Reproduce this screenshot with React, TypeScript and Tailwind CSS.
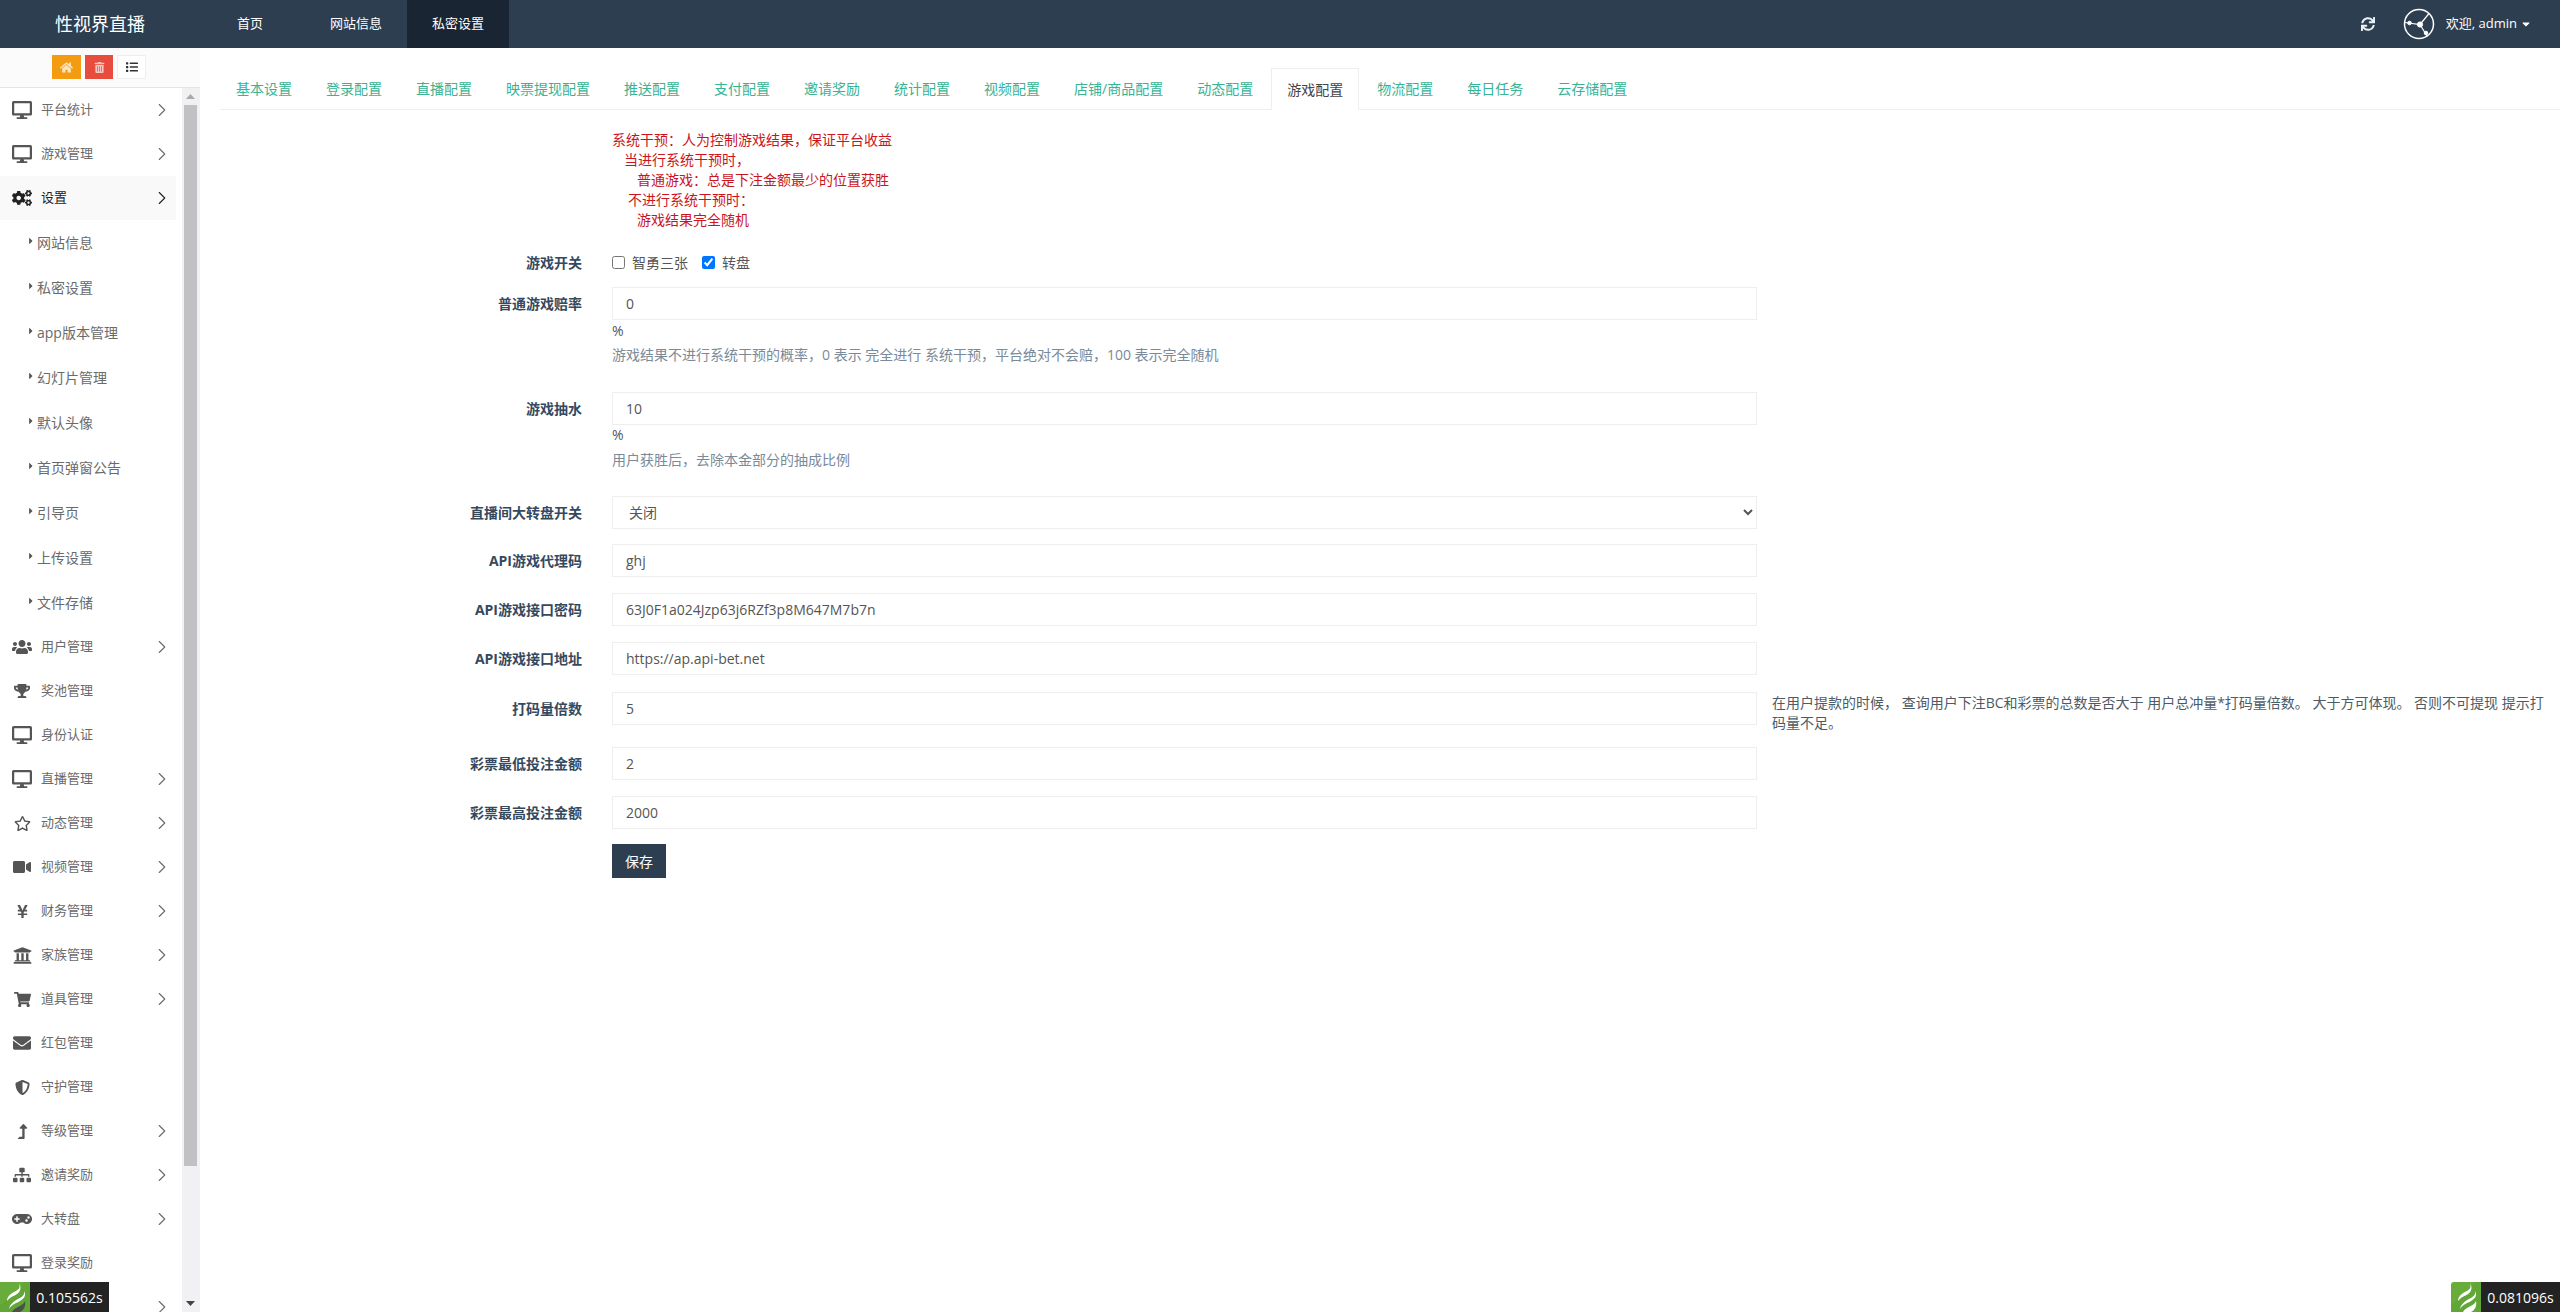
import React from 'react';
import { ChevronRight } from 'lucide-react';
import {
  FaCaretDown,
  FaCaretRight,
  FaCogs,
  FaDesktop,
  FaEnvelope,
  FaGamepad,
  FaHome,
  FaLevelUpAlt,
  FaList,
  FaRegStar,
  FaShieldAlt,
  FaShoppingCart,
  FaSitemap,
  FaSync,
  FaTrashAlt,
  FaTrophy,
  FaUniversity,
  FaUsers,
  FaVideo,
  FaYenSign,
} from 'react-icons/fa';

type MenuItem = {
  label: string;
  icon?: React.ReactNode;
  arrow?: boolean;
  active?: boolean;
  sub?: boolean;
};

const desktop = <FaDesktop size={20} />;

const menuItems: MenuItem[] = [
  { label: '平台统计', icon: desktop, arrow: true },
  { label: '游戏管理', icon: desktop, arrow: true },
  { label: '设置', icon: <FaCogs size={20} />, arrow: true, active: true },
  { label: '网站信息', sub: true },
  { label: '私密设置', sub: true },
  { label: 'app版本管理', sub: true },
  { label: '幻灯片管理', sub: true },
  { label: '默认头像', sub: true },
  { label: '首页弹窗公告', sub: true },
  { label: '引导页', sub: true },
  { label: '上传设置', sub: true },
  { label: '文件存储', sub: true },
  { label: '用户管理', icon: <FaUsers size={20} />, arrow: true },
  { label: '奖池管理', icon: <FaTrophy size={16} /> },
  { label: '身份认证', icon: desktop },
  { label: '直播管理', icon: desktop, arrow: true },
  { label: '动态管理', icon: <FaRegStar size={17} />, arrow: true },
  { label: '视频管理', icon: <FaVideo size={18} />, arrow: true },
  { label: '财务管理', icon: <FaYenSign size={15} />, arrow: true },
  { label: '家族管理', icon: <FaUniversity size={19} />, arrow: true },
  { label: '道具管理', icon: <FaShoppingCart size={17} />, arrow: true },
  { label: '红包管理', icon: <FaEnvelope size={18} /> },
  { label: '守护管理', icon: <FaShieldAlt size={15} /> },
  { label: '等级管理', icon: <FaLevelUpAlt size={15} />, arrow: true },
  { label: '邀请奖励', icon: <FaSitemap size={18} />, arrow: true },
  { label: '大转盘', icon: <FaGamepad size={20} />, arrow: true },
  { label: '登录奖励', icon: desktop },
  // last row sits under the trace badge, only its arrow shows
  { label: '', arrow: true },
];

const tabs = [
  '基本设置',
  '登录配置',
  '直播配置',
  '映票提现配置',
  '推送配置',
  '支付配置',
  '邀请奖励',
  '统计配置',
  '视频配置',
  '店铺/商品配置',
  '动态配置',
  '游戏配置',
  '物流配置',
  '每日任务',
  '云存储配置',
];

const Flame = ({ dark }: { dark?: boolean }) => (
  <svg viewBox="0 0 30 30" className="h-[30px] w-[30px] shrink-0">
    <rect width="30" height="30" fill="#68ad3c" />
    <path d="M0 24 L24 0 L30 0 L30 30 L0 30 Z" fill="#5fa233" opacity="0.6" />
    <path d="M19 1c2 5-1 7-5 9-4 2-7 5-7 9 3-4 7-5 10-7 3-2 5-6 2-11z" fill="#fff" />
    <path d="M24 9c1 4-2 6-6 8-4 2-8 5-9 10 3-5 8-6 11-8 3-2 7-5 4-10z" fill="#fff" />
    <path d="M25 19c-1 3-4 4-7 6-3 1-5 3-6 5h8c4-2 6-6 5-11z" fill={dark ? '#4a5148' : '#fff'} />
  </svg>
);

const TraceBadge = ({ time, className, dark }: { time: string; className: string; dark?: boolean }) => (
  <div className={`fixed bottom-0 flex h-[30px] ${className}`}>
    <Flame dark={dark} />
    <div className="flex w-[79px] items-center justify-center bg-[#232323] text-[14px] text-white">{time}</div>
  </div>
);

const MenuRow = ({ item }: { item: MenuItem }) => {
  if (item.sub) {
    return (
      <div className="flex h-[45px] w-[176px] shrink-0 items-center pl-[26px] text-[14px] text-[#6a6a6a]">
        <FaCaretRight size={10} className="-mt-[3px] mr-[1px] text-[#555]" />
        <span>{item.label}</span>
      </div>
    );
  }
  return (
    <div
      className={`flex h-[44px] w-[176px] shrink-0 items-center pl-[12px] text-[13px] ${
        item.active ? 'bg-[#f9f9fa] text-[#222]' : 'text-[#6a6a6a]'
      }`}
    >
      <span className={`flex w-[20px] justify-center ${item.active ? 'text-[#222]' : 'text-[#555]'}`}>{item.icon}</span>
      <span className="ml-[9px]">{item.label}</span>
      {item.arrow && <ChevronRight size={22} strokeWidth={1.2} className="mr-[3px] ml-auto" />}
    </div>
  );
};

const Sidebar = () => (
  <aside className="flex h-full w-[200px] shrink-0 flex-col">
    <div className="flex h-[40px] shrink-0 gap-[4px] border-b border-[#e4e4e4] bg-[#fbfbfb] pt-[7px] pl-[52px]">
      <div className="flex h-[24px] w-[29px] items-center justify-center bg-[#f39c12] text-[#f8e4c0]">
        <FaHome size={13} />
      </div>
      <div className="flex h-[24px] w-[28px] items-center justify-center bg-[#e74c3c] text-[#f5c6c0]">
        <FaTrashAlt size={11} />
      </div>
      <div className="flex h-[24px] w-[29px] items-center justify-center border border-[#eeeeee] bg-white text-[#333]">
        <FaList size={12} />
      </div>
    </div>
    <div className="flex min-h-0 flex-1">
      <div className="flex w-[182px] shrink-0 flex-col overflow-hidden">
        {menuItems.map((item, i) => (
          <MenuRow key={i} item={item} />
        ))}
      </div>
      <div className="flex w-[18px] flex-col bg-[#f1f0f2] pl-[2px]">
        <div className="flex h-[17px] w-[13px] items-center justify-center">
          <svg width="9" height="5" viewBox="0 0 9 5">
            <path d="M4.5 0L9 5H0Z" fill="#a9a9a9" />
          </svg>
        </div>
        <div className="h-[1061px] w-[13px] bg-[#c1c0c2]" />
        <div className="mt-auto flex h-[17px] w-[13px] items-center justify-center">
          <svg width="9" height="5" viewBox="0 0 9 5">
            <path d="M0 0H9L4.5 5Z" fill="#444" />
          </svg>
        </div>
      </div>
    </div>
  </aside>
);

const Header = () => (
  <header className="flex h-[48px] shrink-0 items-center bg-[#2c3e50] text-[13px] text-white">
    <div className="w-[200px] pl-[55px] text-[18px]">性视界直播</div>
    <div className="flex h-full items-center">
      <div className="pr-[42px] pl-[37px]">首页</div>
      <div className="px-[25px]">网站信息</div>
      <div className="flex h-full items-center bg-[#1a2533] px-[25px]">私密设置</div>
    </div>
    <div className="ml-auto flex items-center pr-[28px]">
      <FaSync size={14} className="mr-[28px] text-[#eef1f4]" />
      <svg width="32" height="32" viewBox="0 0 32 32" className="mr-[11px]" fill="none" stroke="#fff">
        <circle cx="16" cy="16" r="14.5" strokeWidth="1.5" />
        <path d="M2 14.5L17 16.5L26 5.5M17 16.5L24 28" strokeWidth="1.2" />
        <circle cx="6.5" cy="15" r="1.8" fill="#fff" />
        <circle cx="17" cy="16.5" r="2.6" fill="#fff" />
        <circle cx="23" cy="25" r="1.8" fill="#fff" />
      </svg>
      <span>欢迎, admin</span>
      <FaCaretDown size={12} className="ml-[3px]" />
    </div>
  </header>
);

const TabBar = () => (
  <div className="flex h-[42px] border-b border-[#eeeeee] text-[14px]">
    {tabs.map(tab =>
      tab === '游戏配置' ? (
        <div
          key={tab}
          className="mr-[2px] flex h-[42px] items-center border border-b-white border-[#eeeeee] bg-white px-[15px] text-[#444]"
        >
          {tab}
        </div>
      ) : (
        <div key={tab} className="mr-[2px] flex h-[41px] items-center px-[16px] text-[#38b394]">
          {tab}
        </div>
      ),
    )}
  </div>
);

const inputClass =
  'block h-[33px] w-[1145px] shrink-0 border border-[#eeeeee] bg-white px-[13px] text-[14px] text-[#555] outline-none';

const Label = ({ children }: { children: React.ReactNode }) => (
  <label className="flex h-[33px] w-[362px] shrink-0 items-center justify-end text-[14px] font-bold text-[#34495e]">
    {children}
  </label>
);

const Hint = ({ children, className }: { children: React.ReactNode; className: string }) => (
  <p className={`leading-[20px] text-[#7a8a99] ${className}`}>{children}</p>
);

const Field = ({ label, value, className }: { label: string; value: string; className: string }) => (
  <div className={`flex gap-[30px] ${className}`}>
    <Label>{label}</Label>
    <input className={inputClass} defaultValue={value} />
  </div>
);

const GameForm = () => (
  <form className="text-[14px] text-[#555]">
    <div className="mt-[20px] ml-[392px] leading-[20px] text-[#c9151e]">
      <p>系统干预：人为控制游戏结果，保证平台收益</p>
      <p className="pl-[12px]">当进行系统干预时，</p>
      <p className="pl-[25px]">普通游戏：总是下注金额最少的位置获胜</p>
      <p className="pl-[16px]">不进行系统干预时：</p>
      <p className="pl-[25px]">游戏结果完全随机</p>
    </div>

    <div className="mt-[22px] flex h-[20px] items-center gap-[30px]">
      <label className="w-[362px] text-right font-bold text-[#34495e]">游戏开关</label>
      <div className="flex items-center">
        <input type="checkbox" className="m-0 h-[13px] w-[13px]" />
        <span className="ml-[7px]">智勇三张</span>
        <input type="checkbox" defaultChecked className="m-0 ml-[14px] h-[13px] w-[13px]" />
        <span className="ml-[7px]">转盘</span>
      </div>
    </div>

    <div className="mt-[15px] flex gap-[30px]">
      <Label>普通游戏赔率</Label>
      <div>
        <input className={inputClass} defaultValue="0" />
        <p className="mt-[1px] leading-[20px]">%</p>
        <Hint className="mt-[4px]">游戏结果不进行系统干预的概率，0 表示 完全进行 系统干预，平台绝对不会赔，100 表示完全随机</Hint>
      </div>
    </div>

    <div className="mt-[27px] flex gap-[30px]">
      <Label>游戏抽水</Label>
      <div>
        <input className={inputClass} defaultValue="10" />
        <p className="leading-[20px]">%</p>
        <Hint className="mt-[5px]">用户获胜后，去除本金部分的抽成比例</Hint>
      </div>
    </div>

    <div className="mt-[26px] flex gap-[30px]">
      <Label>直播间大转盘开关</Label>
      <select className="h-[33px] w-[1145px] shrink-0 border border-[#eeeeee] bg-white pl-[12px] text-[14px] text-[#555]">
        <option>关闭</option>
      </select>
    </div>

    <Field label="API游戏代理码" value="ghj" className="mt-[15px]" />
    <Field label="API游戏接口密码" value="63J0F1a024Jzp63j6RZf3p8M647M7b7n" className="mt-[16px]" />
    <Field label="API游戏接口地址" value="https://ap.api-bet.net" className="mt-[16px]" />

    <div className="mt-[17px] flex gap-[30px]">
      <Label>打码量倍数</Label>
      <input className={inputClass} defaultValue="5" />
      <p className="-ml-[15px] w-[780px] shrink-0 pt-[1px] leading-[20px] text-[#4d5b66]">
        在用户提款的时候， 查询用户下注BC和彩票的总数是否大于 用户总冲量*打码量倍数。 大于方可体现。 否则不可提现 提示打码量不足。
      </p>
    </div>

    <Field label="彩票最低投注金额" value="2" className="mt-[14px]" />
    <Field label="彩票最高投注金额" value="2000" className="mt-[16px]" />

    <div className="mt-[15px] ml-[392px]">
      <button type="button" className="block h-[34px] w-[54px] bg-[#2c3e50] text-white">
        保存
      </button>
    </div>
  </form>
);

const App = () => (
  <div className="flex h-screen flex-col overflow-hidden bg-white font-['Open_Sans','Noto_Sans_CJK_SC',sans-serif]">
    <Header />
    <div className="flex min-h-0 flex-1">
      <Sidebar />
      <main className="min-w-0 flex-1 pt-[20px] pl-[20px]">
        <TabBar />
        <GameForm />
      </main>
    </div>
    <TraceBadge time="0.105562s" className="left-0" dark />
    <TraceBadge time="0.081096s" className="right-0 overflow-hidden rounded-tl-[3px]" />
  </div>
);

export default App;
